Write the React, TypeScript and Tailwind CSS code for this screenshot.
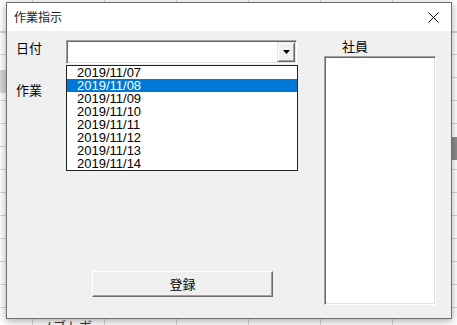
const DATES = [
  '2019/11/07',
  '2019/11/08',
  '2019/11/09',
  '2019/11/10',
  '2019/11/11',
  '2019/11/12',
  '2019/11/13',
  '2019/11/14',
]

const jp = 'font-["Meiryo","Noto_Sans_CJK_JP",sans-serif]'

// Spreadsheet peeking out around the dialog (gridlines drawn as background layers)
function SheetBackdrop() {
  return (
    <div className="absolute inset-0 bg-white bg-[linear-gradient(#d4d4d4,#d4d4d4),linear-gradient(#d6d6d6,#d6d6d6),linear-gradient(#8c8c8c,#8c8c8c),repeating-linear-gradient(to_bottom,transparent_0,transparent_22px,#d4d4d4_22px,#d4d4d4_23px),repeating-linear-gradient(to_right,transparent_0,transparent_32px,#d4d4d4_32px,#d4d4d4_33px,transparent_33px,transparent_72px)] bg-[length:100%_1px,6px_23px,6px_23px,100%_100%,100%_100%] bg-[position:0_32px,0_70px,451px_137px,0_9px,0_0] bg-no-repeat">
      <span className={`absolute left-[40px] top-[318px] text-[13px] leading-[16px] text-[#333] ${jp}`}>ノブトボ</span>
    </div>
  )
}

export default function App() {
  return (
    <div className="relative h-[325px] w-[457px] overflow-hidden">
      <SheetBackdrop />

      {/* Dialog */}
      <div className="absolute left-[6px] top-[2px] flex h-[317px] w-[446px] flex-col border border-[#707070] shadow-[0_2px_8px_rgba(0,0,0,0.35)]">
        {/* Title bar */}
        <div className="flex h-[28px] items-center justify-between bg-white pl-[7px] pr-[12px]">
          <span className={`text-[12px] leading-[16px] text-[#1a1a1a] ${jp}`}>作業指示</span>
          <svg width="11" height="11" viewBox="0 0 11 11" className="text-black">
            <path d="M0.5 0.5L10.5 10.5M10.5 0.5L0.5 10.5" stroke="currentColor" strokeWidth="1" />
          </svg>
        </div>

        {/* Body */}
        <div className={`flex flex-1 bg-[#f0f0f0] pl-[9px] pt-[9px] text-[13px] text-black ${jp}`}>
          {/* Left column */}
          <div className="flex w-[281px] flex-col">
            <div className="flex items-start">
              <span className="w-[51px] leading-[16px]">日付</span>
              <div className="relative">
                {/* Combo box */}
                <div className="flex h-[24px] w-[231px] justify-end border border-t-[#a0a0a0] border-l-[#a0a0a0] border-r-white border-b-white bg-white p-px shadow-[inset_1px_1px_0_#696969,inset_-1px_-1px_0_#e3e3e3]">
                  <div className="flex h-full w-[18px] items-center justify-center border border-t-[#e3e3e3] border-l-[#e3e3e3] border-r-[#696969] border-b-[#696969] bg-[#f0f0f0] shadow-[inset_1px_1px_0_#fff,inset_-1px_-1px_0_#a0a0a0]">
                    <svg width="7" height="4" viewBox="0 0 7 4">
                      <path d="M0 0H7L3.5 4Z" fill="#000" />
                    </svg>
                  </div>
                </div>

                {/* Open dropdown list */}
                <div className="absolute left-0 top-[25px] z-10 w-[232px] border border-[#222] bg-white font-['Liberation_Sans',Arial,sans-serif]">
                  {DATES.map((d, i) => (
                    <div
                      key={d}
                      className={`h-[13px] pl-[10px] text-[13px] leading-[13px] ${
                        i === 1 ? 'bg-[#0078d7] text-white' : 'text-black'
                      }`}
                    >
                      {d}
                    </div>
                  ))}
                </div>
              </div>
            </div>

            <span className="mt-[18px] leading-[16px]">作業</span>

            <button
              type="button"
              className="ml-[76px] mt-[173px] flex h-[26px] w-[181px] items-center justify-center border border-t-white border-l-white border-r-[#696969] border-b-[#696969] bg-[#f0f0f0] shadow-[inset_-1px_-1px_0_#a0a0a0] leading-[16px]"
            >
              登録
            </button>
          </div>

          {/* Right column */}
          <div className="ml-[27px] -mt-[2px] flex w-[112px] flex-col">
            <span className="ml-[18px] leading-[16px]">社員</span>
            <div className="mt-[2px] h-[249px] w-[112px] border border-t-[#a0a0a0] border-l-[#a0a0a0] border-r-white border-b-white bg-white shadow-[inset_1px_1px_0_#696969,inset_-1px_-1px_0_#e3e3e3]" />
          </div>
        </div>
      </div>
    </div>
  )
}
